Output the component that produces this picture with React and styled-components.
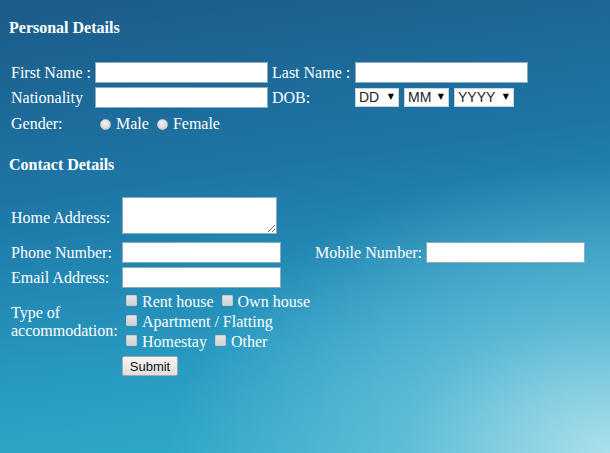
import React from 'react';
import styled, { createGlobalStyle } from 'styled-components';

const GlobalStyle = createGlobalStyle`
    html, body {
        margin: 0;
        padding: 0;
    }
    body {
        font-family: "Liberation Serif", "Times New Roman", serif;
        font-size: 16px;
        color: #ffffff;
    }
`;

const Page = styled.div`
    width: 610px;
    height: 453px;
    overflow: hidden;
    box-sizing: border-box;
    padding: 19px 0 0 9px;
    background:
        radial-gradient(ellipse 85% 75% at 100% 100%, rgba(178, 226, 237, 0.95) 0%, rgba(130, 205, 224, 0.55) 40%, rgba(110, 195, 220, 0) 85%),
        linear-gradient(172deg, #1b5b88 0%, #1e76a6 38%, #2799c1 70%, #33afcb 100%);
`;

const SectionTitle = styled.h3`
    margin: ${props => props.first ? '0' : '21px'} 0 0 0;
    font-size: 16px;
    line-height: 18px;
    font-weight: bold;
`;

const FormGrid = styled.div`
    display: grid;
    grid-template-columns: ${props => props.columns};
    grid-template-rows: ${props => props.rows || 'auto'};
    column-gap: 4px;
    row-gap: 4px;
    align-items: center;
    margin: ${props => props.top}px 0 0 2px;
    line-height: 18px;
`;

const Label = styled.label`
    white-space: nowrap;
    justify-self: ${props => props.right ? 'end' : 'start'};
`;

const TextInput = styled.input`
    box-sizing: border-box;
    width: ${props => props.width || 173}px;
    height: 21px;
    margin: 0;
    padding: 1px 3px;
    border: 1px solid #8eaabd;
    background: #ffffff;
    font-family: "Liberation Sans", Arial, sans-serif;
    font-size: 13px;
`;

const TextArea = styled.textarea`
    box-sizing: border-box;
    display: block;
    width: 155px;
    height: 37px;
    margin: 0 0 4px 0;
    padding: 2px;
    border: 1px solid #8eaabd;
    background: #ffffff;
    font-family: "Liberation Sans", Arial, sans-serif;
    font-size: 13px;
`;

const Wide = styled.div`
    grid-column: ${props => props.span};
    display: flex;
    align-items: center;
`;

const SelectRow = styled.div`
    display: flex;
    gap: 5px;
    align-items: center;
`;

const SelectWrap = styled.span`
    position: relative;
    display: inline-block;
`;

const Select = styled.select`
    appearance: none;
    -webkit-appearance: none;
    box-sizing: border-box;
    width: ${props => props.width}px;
    height: 19px;
    margin: 0;
    padding: 0 0 0 3px;
    border: 1px solid #c9d3da;
    background: #ffffff;
    color: #222222;
    font-family: "Liberation Sans", Arial, sans-serif;
    font-size: 14px;
    line-height: 17px;
`;

const Arrow = styled.span`
    position: absolute;
    right: 5px;
    top: 3px;
    font-family: "DejaVu Sans", sans-serif;
    font-size: 8px;
    line-height: 12px;
    color: #000000;
    pointer-events: none;
`;

const Choice = styled.label`
    display: inline-flex;
    align-items: center;
    margin-right: ${props => props.gap || 0}px;
    white-space: nowrap;
`;

const Radio = styled.input`
    appearance: none;
    -webkit-appearance: none;
    width: 11px;
    height: 11px;
    margin: 1px 5px 0 5px;
    border-radius: 50%;
    border: 1px solid #c6c6c6;
    background: radial-gradient(circle at 40% 35%, #f2f2f2 0%, #d7d7d7 70%, #c8c8c8 100%);
    box-sizing: border-box;
`;

const Check = styled.input`
    appearance: none;
    -webkit-appearance: none;
    box-sizing: border-box;
    width: 11px;
    height: 11px;
    margin: -4px 5px 0 4px;
    border: 1px solid #c9c9c9;
    border-radius: 1px;
    background: linear-gradient(#e4e4e4, #d2d2d2);
`;

const CheckGroup = styled.div`
    display: flex;
    flex-direction: column;
    grid-column: 2 / 5;
`;

const CheckLine = styled.div`
    display: flex;
    align-items: center;
    height: 20px;
`;

const Stacked = styled.div`
    line-height: 18px;
`;

const Submit = styled.button`
    box-sizing: border-box;
    width: 56px;
    height: 20px;
    margin: 0;
    padding: 0;
    border: 1px solid #a8a8a8;
    border-radius: 2px;
    background: linear-gradient(#f6f6f6, #dedede);
    color: #111111;
    font-family: "Liberation Sans", Arial, sans-serif;
    font-size: 13px;
`;

const DateSelect = ({ label, width }) => (
    <SelectWrap>
        <Select width={width} defaultValue={label}>
            <option>{label}</option>
        </Select>
        <Arrow>▼</Arrow>
    </SelectWrap>
);

const App = () => {
    return (
        <Page>
            <GlobalStyle />
            <SectionTitle first>Personal Details</SectionTitle>
            <FormGrid columns="80px 173px 79px 173px" rows="21px 21px 23px" top={25}>
                <Label>First Name :</Label>
                <TextInput />
                <Label>Last Name :</Label>
                <TextInput />

                <Label>Nationality</Label>
                <TextInput />
                <Label>DOB:</Label>
                <SelectRow>
                    <DateSelect label="DD" width={44} />
                    <DateSelect label="MM" width={45} />
                    <DateSelect label="YYYY" width={60} />
                </SelectRow>

                <Label>Gender:</Label>
                <Wide span="2 / 5">
                    <Choice gap={3}><Radio type="radio" name="gender" />Male</Choice>
                    <Choice><Radio type="radio" name="gender" />Female</Choice>
                </Wide>
            </FormGrid>

            <SectionTitle>Contact Details</SectionTitle>
            <FormGrid columns="107px 159px 137px 159px" top={23}>
                <Label>Home Address:</Label>
                <Wide span="2 / 5">
                    <TextArea />
                </Wide>

                <Label>Phone Number:</Label>
                <TextInput width={159} />
                <Label right>Mobile Number:</Label>
                <TextInput width={159} />

                <Label>Email Address:</Label>
                <TextInput width={159} />
                <span />
                <span />

                <Stacked>Type of<br />accommodation:</Stacked>
                <CheckGroup>
                    <CheckLine>
                        <Choice gap={4}><Check type="checkbox" />Rent house</Choice>
                        <Choice><Check type="checkbox" />Own house</Choice>
                    </CheckLine>
                    <CheckLine>
                        <Choice><Check type="checkbox" />Apartment / Flatting</Choice>
                    </CheckLine>
                    <CheckLine>
                        <Choice gap={4}><Check type="checkbox" />Homestay</Choice>
                        <Choice><Check type="checkbox" />Other</Choice>
                    </CheckLine>
                </CheckGroup>

                <span />
                <Wide span="2 / 5">
                    <Submit type="button">Submit</Submit>
                </Wide>
            </FormGrid>
        </Page>
    );
};

export default App;
